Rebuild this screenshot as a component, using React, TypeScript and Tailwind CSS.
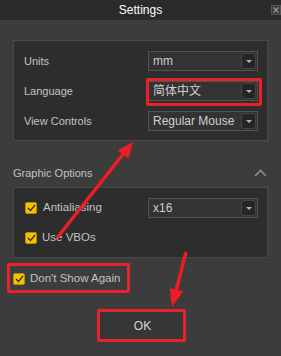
import React from "react";

const font = { fontFamily: '"Liberation Sans", "Noto Sans CJK SC", sans-serif' };

const Dropdown: React.FC<{ value: string }> = ({ value }) => (
  <div className="w-[110px] h-[20px] bg-[#333333] border border-[#525252] flex items-center justify-between pl-[4px] pr-[1px]">
    <span className="text-[12px] text-[#cfcfcf] leading-none">{value}</span>
    <div className="w-[15px] h-[16px] rounded-[3px] bg-[#252525] border border-[#444] flex items-center justify-center">
      <div className="w-0 h-0 border-l-[3px] border-r-[3px] border-t-[3px] border-l-transparent border-r-transparent border-t-[#b5b5b5]" />
    </div>
  </div>
);

const Check: React.FC = () => (
  <div className="w-[12px] h-[12px] rounded-[2px] bg-[#f3c300] border border-[#b38f00] flex items-center justify-center">
    <svg width="9" height="8" viewBox="0 0 9 8">
      <path d="M1 4 L3.5 6.5 L8 1" fill="none" stroke="#3a2e00" strokeWidth="1.3" />
    </svg>
  </div>
);

const Row: React.FC<{ label: string; value: string }> = ({ label, value }) => (
  <div className="flex items-center justify-between pl-[10px] pr-[9px]">
    <span className="text-[11px] text-[#c2c2c2] pt-[1px]">{label}</span>
    <Dropdown value={value} />
  </div>
);

export default function App() {
  return (
    <div className="relative w-[281px] h-[356px] bg-[#3c3c3c] overflow-hidden" style={font}>
      {/* title bar */}
      <div className="h-[20px] bg-[#2a2a2a] flex items-center justify-center relative">
        <span className="text-[12px] text-white">Settings</span>
        <div className="absolute right-0 top-[5px] w-[10px] h-[10px] bg-[#3b3b3b] border border-[#555] flex items-center justify-center">
          <svg width="6" height="6" viewBox="0 0 6 6">
            <path d="M0.5 0.5 L5.5 5.5 M5.5 0.5 L0.5 5.5" stroke="#9a9a9a" strokeWidth="1.2" />
          </svg>
        </div>
      </div>

      <div className="px-[13px]">
        <div className="mt-[20px] h-[101px] bg-[#2d2d2d] border border-[#4a4a4a] pt-[10px] flex flex-col gap-[10px]">
          <Row label="Units" value="mm" />
          <Row label="Language" value="简体中文" />
          <Row label="View Controls" value="Regular Mouse" />
        </div>

        <div className="mt-[25px] flex items-center justify-between h-[14px]">
          <span className="text-[11px] text-[#c2c2c2]">Graphic Options</span>
          <svg width="13" height="8" viewBox="0 0 13 8" className="mr-[1px]">
            <path d="M1 7 L6.5 1.5 L12 7" fill="none" stroke="#8a8a8a" strokeWidth="1.6" />
          </svg>
        </div>

        <div className="mt-[7px] h-[71px] bg-[#2d2d2d] border border-[#4a4a4a] pt-[10px] flex flex-col">
          <div className="flex items-center justify-between pl-[11px] pr-[9px] h-[20px]">
            <div className="flex items-center gap-[6px]">
              <Check />
              <span className="text-[11.5px] text-[#c2c2c2]">Antialiasing</span>
            </div>
            <Dropdown value="x16" />
          </div>
          <div className="flex items-center gap-[5px] pl-[11px] mt-[10px] h-[20px]">
            <Check />
            <span className="text-[11.5px] text-[#c2c2c2]">Use VBOs</span>
          </div>
        </div>

        <div className="mt-[15px] flex items-center gap-[5px] h-[12px]">
          <Check />
          <span className="text-[11.5px] text-[#c2c2c2]">Don't Show Again</span>
        </div>

        <div className="mt-[25px] ml-[87px] w-[86px] h-[31px] bg-[#363636] border-r border-[#8a8a8a] flex items-center justify-center">
          <span className="text-[12px] text-[#d6d6d6]">OK</span>
        </div>
      </div>

      {/* annotations */}
      <div className="absolute left-[146px] top-[78px] w-[116px] h-[28px] border-[3px] border-[#e8222b] rounded-[2px]" />
      <div className="absolute left-[7px] top-[263px] w-[123px] h-[30px] border-[3px] border-[#e8222b] rounded-[2px]" />
      <div className="absolute left-[97px] top-[309px] w-[89px] h-[33px] border-[3px] border-[#e8222b] rounded-[2px]" />
      <svg className="absolute left-0 top-0" width="281" height="356" viewBox="0 0 281 356">
        <line x1="57" y1="238" x2="124" y2="153" stroke="#ee1c25" strokeWidth="3.5" />
        <polygon points="133,142 128.6,158.8 117.6,150.2" fill="#ee1c25" />
        <line x1="186" y1="252" x2="176" y2="291" stroke="#ee1c25" strokeWidth="3.5" />
        <polygon points="172,307 183.2,291.3 169.6,287.9" fill="#ee1c25" />
      </svg>
    </div>
  );
}
